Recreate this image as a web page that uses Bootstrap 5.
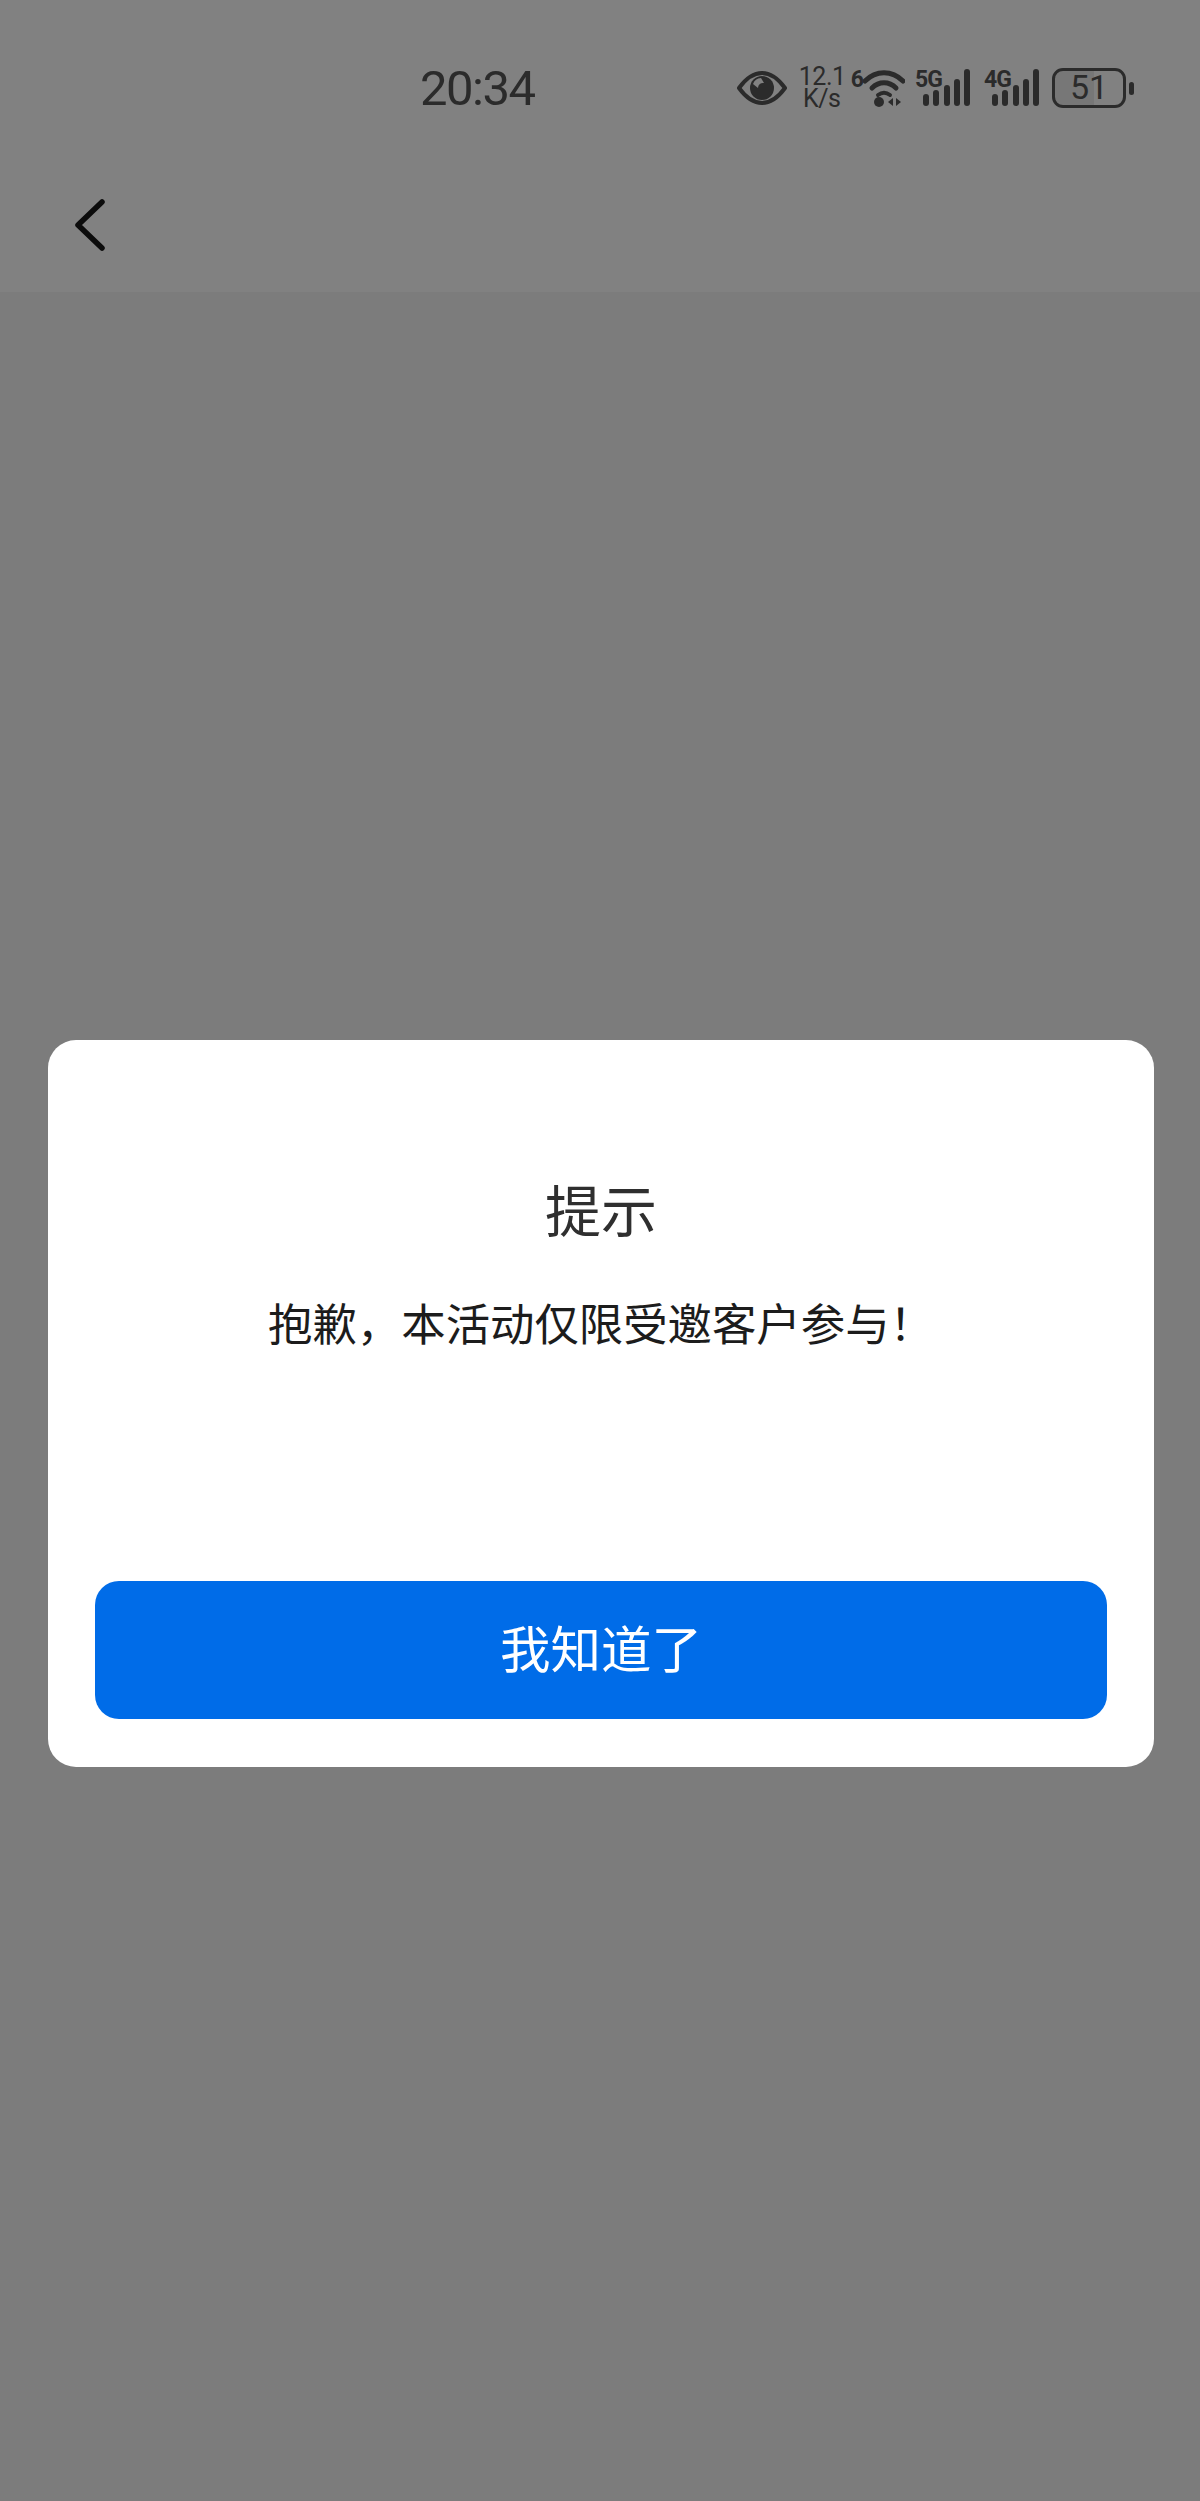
<!DOCTYPE html>
<html lang="zh-CN">
<head>
    <meta charset="UTF-8">
    <meta name="viewport" content="width=device-width, initial-scale=1.0">
    <title>提示</title>
    <link href="https://cdn.jsdelivr.net/npm/bootstrap@5.3.0/dist/css/bootstrap.min.css" rel="stylesheet">
    <style>
        html, body { height: 2501px; }
        body {
            background-color: #7c7c7c;
            font-family: "Noto Sans CJK SC", "Noto Sans", sans-serif;
            overflow: hidden;
        }
        .top-area { height: 292px; background-color: #818181; }
        .status-row { height: 120px; padding: 56px 66px 0 420px; color: #2b2b2b; font-family: Roboto, sans-serif; }
        .clock { font-size: 49px; line-height: 1; letter-spacing: -1.5px; }
        .speed { width: 46px; margin-left: 12px; font-size: 25px; line-height: 22px; text-align: center; letter-spacing: -.5px; }
        .sim-wrap { height: 40px; margin-left: 6px; }
        .sim-tag { font-size: 23px; font-weight: 700; line-height: 1; letter-spacing: -1px; }
        .sig-five { margin-left: 10px; }
        .sig-four { margin-left: 13px; }
        .batt-box {
            width: 74px; height: 40px; margin-left: 12px;
            border: 3px solid #2b2b2b; border-radius: 11px;
            background: linear-gradient(90deg, #777 0 57%, transparent 57%);
            font-size: 34px; line-height: 33px; text-align: center;
        }
        .batt-nub { width: 5px; height: 13px; margin-left: 3px; background: #2b2b2b; border-radius: 3px; }
        .back-row { height: 172px; padding: 78px 0 0 74px; }
        .dialog-area { padding: 748px 46px 0 48px; }
        .dialog-card { height: 727px; border: 0; border-radius: 28px; padding: 129px 47px 48px; }
        .dialog-title { font-size: 56px; line-height: 78px; color: #2f2f2f; font-weight: 400; margin: 0; }
        .dialog-text { font-size: 44.4px; line-height: 60px; color: #1c1c1c; margin: 45px 0 0; white-space: nowrap; }
        .ok-btn {
            height: 138px; margin-top: auto; padding: 0 0 7px; border: 0; border-radius: 24px;
            background-color: #006ce8; color: #fff; font-size: 50.5px; line-height: 1;
        }
    </style>
</head>
<body>
    <header class="top-area">
        <div class="status-row d-flex align-items-center">
            <span class="clock">20:34</span>
            <div class="d-flex align-items-center ms-auto">
                <svg width="50" height="34" viewBox="0 0 50 34">
                    <path d="M2 17C10 6 17 2 25 2s15 4 23 15c-8 11-15 15-23 15S10 28 2 17z" fill="none" stroke="#2b2b2b" stroke-width="4" stroke-linejoin="round"/>
                    <circle cx="25" cy="17" r="12" fill="#2b2b2b"/>
                    <path d="M16 13a9 9 0 0 1 8-6l3 5a5 5 0 0 0-6 5z" fill="#818181"/>
                </svg>
                <div class="speed">12.1<br>K/s</div>
                <div class="d-flex align-items-start sim-wrap">
                    <span class="sim-tag">6</span>
                    <svg width="42" height="40" viewBox="0 0 42 40">
                        <path d="M2 13C13 2 29 2 40 13" fill="none" stroke="#2b2b2b" stroke-width="5" stroke-linecap="round"/>
                        <path d="M9 20c7-7 17-7 24 0" fill="none" stroke="#2b2b2b" stroke-width="5" stroke-linecap="round"/>
                        <path d="M15 27c4-3 8-3 12 0" fill="none" stroke="#2b2b2b" stroke-width="4" stroke-linecap="round"/>
                        <circle cx="16" cy="34" r="5" fill="#2b2b2b"/>
                        <path d="M25 34l5-4v8zM33 30l5 4-5 4z" fill="#2b2b2b"/>
                    </svg>
                </div>
                <div class="sig-five position-relative">
                    <svg width="56" height="40" viewBox="0 0 56 40">
                        <rect x="8" y="26" width="6" height="12" rx="3" fill="#2b2b2b"/>
                        <rect x="18" y="22" width="6" height="16" rx="3" fill="#2b2b2b"/>
                        <rect x="29" y="17" width="6" height="21" rx="3" fill="#2b2b2b"/>
                        <rect x="39" y="11" width="6" height="27" rx="3" fill="#2b2b2b"/>
                        <rect x="49" y="1" width="6" height="37" rx="3" fill="#2b2b2b"/>
                    </svg>
                    <span class="sim-tag position-absolute top-0 start-0">5G</span>
                </div>
                <div class="sig-four position-relative">
                    <svg width="56" height="40" viewBox="0 0 56 40">
                        <rect x="8" y="26" width="6" height="12" rx="3" fill="#2b2b2b"/>
                        <rect x="18" y="22" width="6" height="16" rx="3" fill="#2b2b2b"/>
                        <rect x="29" y="17" width="6" height="21" rx="3" fill="#2b2b2b"/>
                        <rect x="39" y="11" width="6" height="27" rx="3" fill="#2b2b2b"/>
                        <rect x="49" y="1" width="6" height="37" rx="3" fill="#2b2b2b"/>
                    </svg>
                    <span class="sim-tag position-absolute top-0 start-0">4G</span>
                </div>
                <div class="batt-box">51</div>
                <div class="batt-nub"></div>
            </div>
        </div>
        <div class="back-row">
            <svg width="32" height="54" viewBox="0 0 32 54">
                <path d="M28 4L4 27l24 23" fill="none" stroke="#0c0c0c" stroke-width="5.5" stroke-linecap="round" stroke-linejoin="round"/>
            </svg>
        </div>
    </header>
    <main class="dialog-area">
        <div class="card dialog-card text-center">
            <h5 class="dialog-title">提示</h5>
            <p class="dialog-text">抱歉，本活动仅限受邀客户参与！</p>
            <button type="button" class="btn ok-btn w-100">我知道了</button>
        </div>
    </main>
    <script src="https://cdn.jsdelivr.net/npm/bootstrap@5.3.0/dist/js/bootstrap.bundle.min.js"></script>
</body>
</html>
